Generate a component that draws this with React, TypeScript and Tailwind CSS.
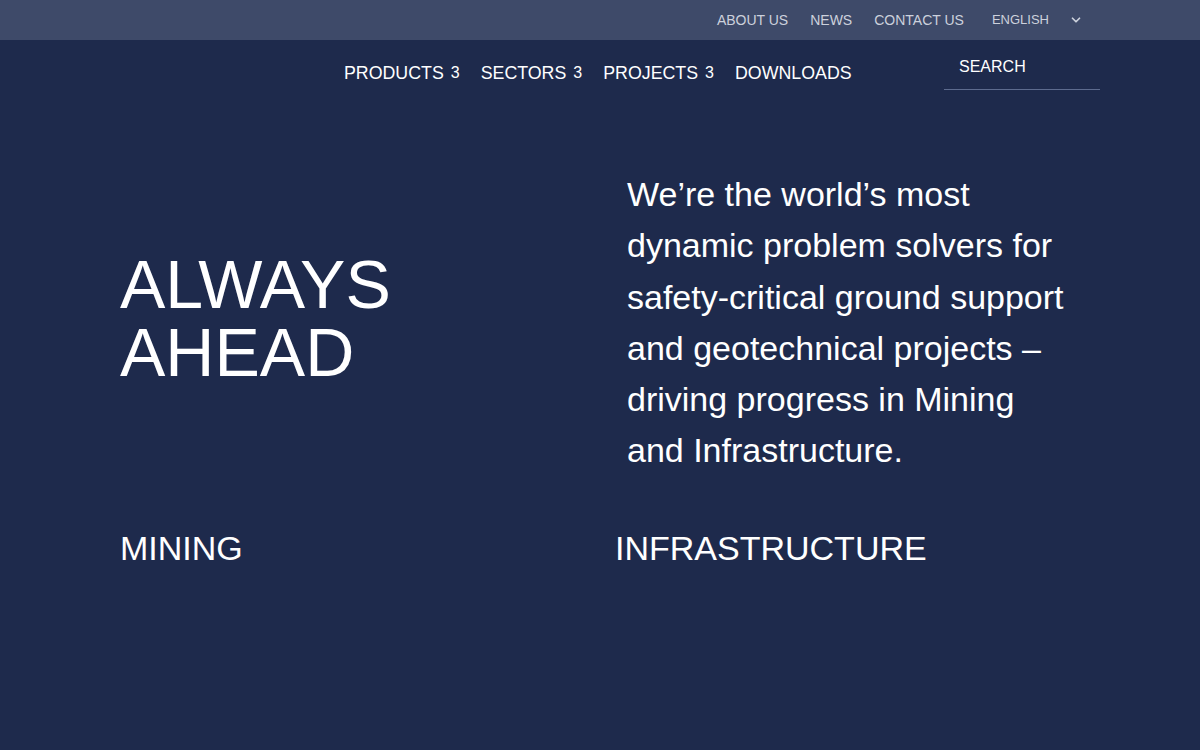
import { ChevronDown } from "lucide-react";

const topLinks = ["ABOUT US", "NEWS", "CONTACT US"];
const mainLinks = [
  { label: "PRODUCTS", sub: true },
  { label: "SECTORS", sub: true },
  { label: "PROJECTS", sub: true },
  { label: "DOWNLOADS", sub: false },
];

export default function App() {
  return (
    <div className="min-h-[750px] bg-[#1e2a4c] text-white font-['Liberation_Sans',Arial,sans-serif]">
      {/* top bar */}
      <div className="h-10 bg-[#3e4a69] flex items-center justify-end pr-[117px]">
        <nav className="flex items-center gap-[22px] text-[14px] text-[#ccd1dc]">
          {topLinks.map((l) => (
            <a key={l} href="#" className="leading-none">
              {l}
            </a>
          ))}
        </nav>
        <div className="ml-[28px] flex items-center text-[13px] text-[#ccd1dc]">
          <span>ENGLISH</span>
          <ChevronDown className="ml-[20px] w-[14px] h-[14px]" strokeWidth={3} />
        </div>
      </div>

      {/* main nav */}
      <header className="h-[58px] flex items-center pl-[344px] pr-[100px]">
        <nav className="flex items-center gap-[21px] text-[17.8px] pt-[8px]">
          {mainLinks.map((l) => (
            <a key={l.label} href="#" className="flex items-baseline">
              {l.label}
              {l.sub && <span className="relative -top-[1px] ml-[7px] text-[16px]">3</span>}
            </a>
          ))}
        </nav>
        <div className="ml-auto w-[156px] border-b border-[#5d6b8e] pl-[15px] pb-[10px] pt-[7px] text-[16px]">
          SEARCH
        </div>
      </header>

      {/* hero */}
      <section className="grid grid-cols-[507px_1fr] px-[120px] pt-[71px]">
        <div className="flex items-center">
          <h1 className="text-[68px] leading-[68px] font-normal pb-[10px]">
            ALWAYS
            <br />
            AHEAD
          </h1>
        </div>
        <p className="text-[34px] leading-[51.3px] max-w-[445px]">
          We’re the world’s most dynamic problem solvers for safety-critical ground support and geotechnical
          projects – driving progress in Mining and Infrastructure.
        </p>
      </section>

      <section className="grid grid-cols-[495px_1fr] px-[120px] pt-[54px]">
        <h2 className="text-[34px] leading-none">MINING</h2>
        <h2 className="text-[34px] leading-none">INFRASTRUCTURE</h2>
      </section>
    </div>
  );
}
